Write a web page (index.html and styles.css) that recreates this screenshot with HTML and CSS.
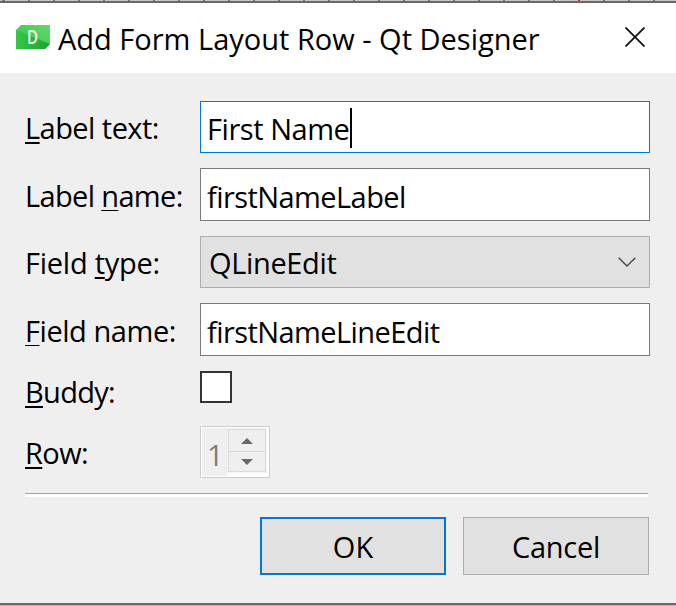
FILE: index.html
```html
<!DOCTYPE html>
<html lang="en">
<head>
<meta charset="utf-8">
<title>Add Form Layout Row - Qt Designer</title>
<link rel="stylesheet" href="styles.css">
</head>
<body>
<div class="window">
  <div class="ruler"></div>
  <header class="titlebar">
    <svg class="app-icon" width="34" height="24" viewBox="0 0 34 24">
      <defs>
        <linearGradient id="light" x1="0" y1="1" x2="1" y2="0"><stop offset="0" stop-color="#2fc43f"/><stop offset="1" stop-color="#62d970"/></linearGradient>
        <linearGradient id="dark" x1="0" y1="0" x2="1" y2="0"><stop offset="0" stop-color="#38c648"/><stop offset="1" stop-color="#1ca22c"/></linearGradient>
      </defs>
      <path d="M5 0H34V19L29 24H0V5Z" fill="url(#light)"/>
      <path d="M0 5 34 19 29 24H0Z" fill="url(#dark)"/>
      <text class="app-letter" x="11" y="18.5" textLength="11" lengthAdjust="spacingAndGlyphs">D</text>
    </svg>
    <h1 class="title">Add Form Layout Row - Qt Designer</h1>
    <svg class="close" width="20" height="20" viewBox="0 0 20 20"><path d="M.5 .5 19.5 19.5M19.5 .5 .5 19.5"/></svg>
  </header>
  <main class="content">
    <div class="form">
      <label class="label label-text"><u class="thick">L</u>abel text:</label>
      <div class="field focused"><span class="v-text">First Name</span><i class="caret"></i></div>

      <label class="label label-name">Label <u>n</u>ame:</label>
      <div class="field"><span class="v-label">firstNameLabel</span></div>

      <label class="label field-type">Field <u class="thick">t</u>ype:</label>
      <div class="combo"><span>QLineEdit</span>
        <svg width="18" height="10" viewBox="0 0 18 10"><path d="M.7 .7 9 9 17.3 .7"/></svg>
      </div>

      <label class="label field-name"><u>F</u>ield name:</label>
      <div class="field"><span class="v-edit">firstNameLineEdit</span></div>

      <label class="label buddy"><u class="thick">B</u>uddy:</label>
      <div class="checkbox"></div>

      <label class="label row-label"><u class="thick">R</u>ow:</label>
      <div class="spin">
        <span class="spin-value">1</span>
        <div class="spin-buttons">
          <div class="step up"><svg width="12" height="6" viewBox="0 0 12 6"><path d="M0 6 6 0 12 6Z"/></svg></div>
          <div class="step down"><svg width="12" height="6" viewBox="0 0 12 6"><path d="M0 0H12L6 6Z"/></svg></div>
        </div>
      </div>
    </div>
    <div class="separator"></div>
    <div class="actions">
      <div class="button default">OK</div>
      <div class="button cancel">Cancel</div>
    </div>
  </main>
</div>
</body>
</html>
```
FILE: styles.css
```css
* { box-sizing: border-box; }
body {
  margin: 0;
  font: 29px/40px "Open Sans", "Noto Sans", sans-serif;
  color: #000;
}
.window {
  display: flex;
  flex-direction: column;
  height: 606px;
  background: #efefef;
  border-bottom: 1px solid #b5b5b5;
}
.ruler {
  height: 3px;
  border-bottom: 2px solid #696969;
  background:
    linear-gradient(#c22c2c, #c22c2c) 578px 0 / 2px 2px no-repeat,
    repeating-linear-gradient(90deg, #777 0 2px, #c8cac8 2px 25px) 3px 0;
}
.titlebar {
  display: flex;
  height: 70px;
  padding: 0 31px 0 16px;
  background: #fff;
}
.app-icon { margin-top: 22px; overflow: visible; }
.app-letter { font: 600 20px "Open Sans", sans-serif; fill: #fff; }
.title {
  flex: 1;
  margin: 16px 0 0 8px;
  font-size: 29px;
  font-weight: 400;
  white-space: nowrap;
}
.close {
  margin-top: 24px;
  fill: none;
  stroke: #111;
  stroke-width: 1.8;
}
.content {
  flex: 1;
  padding: 28px 26px 0 25px;
  border-bottom: 2px solid #696969;
}
.form {
  display: grid;
  grid-template-columns: 175px 450px;
  grid-template-rows: 52px 53px 52px 53px 40px 52px;
  row-gap: 15px;
}
.label {
  align-self: center;
  padding-top: 2px;
  white-space: nowrap;
}
.label-text { letter-spacing: -.55px; }
.label-name { letter-spacing: -.65px; }
.field-type { letter-spacing: -.25px; }
.field-name { letter-spacing: -.45px; }
.buddy { letter-spacing: -.7px; }
.row-label { letter-spacing: -.6px; }
u {
  text-decoration-thickness: 1px;
  text-underline-offset: 3px;
  text-decoration-skip-ink: none;
}
u.thick { text-decoration-thickness: 2px; }
.field {
  display: flex;
  align-items: center;
  padding: 4px 6px 0;
  background: #fff;
  border: 1px solid #7a7a7a;
}
.focused { border-color: #0078d7; }
.v-text { letter-spacing: -.45px; }
.v-label { letter-spacing: -.57px; }
.v-edit { letter-spacing: -.57px; }
.caret { width: 2px; height: 40px; margin: 0 0 2px 1px; background: #000; }
.combo {
  display: flex;
  align-items: center;
  justify-content: space-between;
  padding: 2px 13px 0 8px;
  background: #e1e1e1;
  border: 1px solid #adadad;
  letter-spacing: -.35px;
}
.combo svg { margin-bottom: 2px; fill: none; stroke: #444; stroke-width: 1.3; }
.checkbox {
  width: 32px;
  height: 32px;
  background: #fff;
  border: 2px solid #333;
}
.spin {
  display: flex;
  width: 70px;
  padding: 1px;
  background: #fff;
  border: 1px solid #ccc;
}
.spin-value {
  width: 25px;
  height: 48px;
  padding: 7px 0 0 5px;
  background: #efefef;
  color: #7d7d7d;
}
.spin-buttons {
  width: 40px;
  height: 45px;
  padding: 1px;
  background: #f3f3f3;
}
.step {
  display: flex;
  align-items: center;
  justify-content: center;
  height: 23px;
  background: #efefef;
  border: 1px solid #d9d9d9;
}
.step svg { fill: #696969; }
.down { height: 20px; border-top: 0; }
.separator {
  width: 623px;
  height: 4px;
  margin-top: 15px;
  background: #fff;
  border-top: 1px solid #a0a0a0;
}
.actions {
  display: flex;
  justify-content: flex-end;
  gap: 17px;
  margin: 20px 1px 0 0;
}
.button {
  width: 186px;
  height: 58px;
  padding-top: 9px;
  background: #e1e1e1;
  border: 1px solid #adadad;
  text-align: center;
}
.default { padding-top: 8px; border: 2px solid #0078d7; }
.cancel { letter-spacing: -.25px; }
```
